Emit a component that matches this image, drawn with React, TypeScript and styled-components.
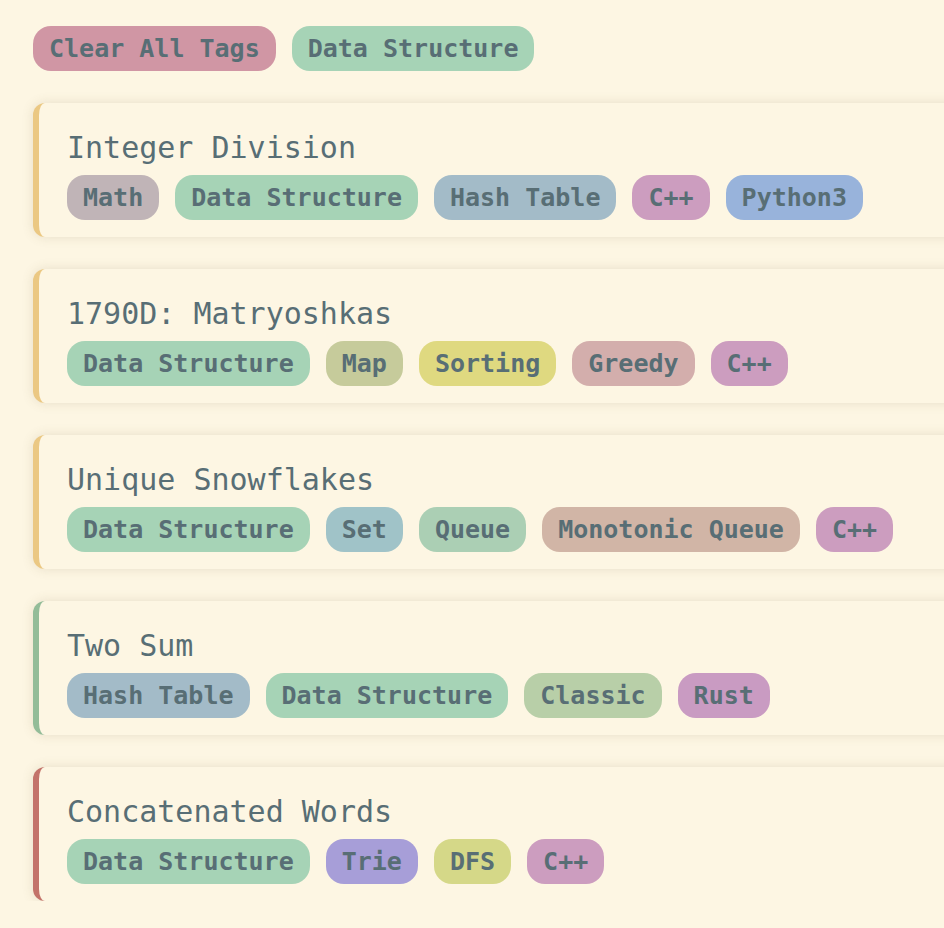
import styled, { createGlobalStyle } from "styled-components";

const GlobalStyle = createGlobalStyle`
  html, body {
    margin: 0;
    padding: 0;
    background: #fdf6e3;
    overflow: hidden;
  }
  body {
    font-family: "DejaVu Sans Mono", "Liberation Mono", monospace;
    color: #586e75;
  }
`;

const Page = styled.div`
  padding: 26px 0 0 33px;
  width: 960px;
`;

const TagRow = styled.div`
  display: flex;
  flex-wrap: wrap;
  gap: 16px;
`;

const Tag = styled.span<{ $bg: string }>`
  display: inline-flex;
  align-items: center;
  height: 45px;
  padding: 0 16px;
  border-radius: 18px;
  background: ${(p) => p.$bg};
  color: #586e75;
  font-size: 25px;
  font-weight: bold;
  white-space: pre;
`;

const CardList = styled.div`
  display: flex;
  flex-direction: column;
  gap: 32px;
  margin-top: 32px;
`;

const Card = styled.div<{ $accent: string }>`
  border-left: 6px solid ${(p) => p.$accent};
  border-radius: 12px 0 0 12px;
  background: #fdf6e3;
  box-shadow: 0 0 12px rgba(120, 100, 60, 0.16);
  padding: 27px 0 17px 28px;
`;

const Title = styled.div`
  font-size: 30px;
  line-height: 35px;
  margin-bottom: 10px;
  white-space: pre;
`;

const tagColors: Record<string, string> = {
  "Data Structure": "#a6d3b6",
  Math: "#c0b4b7",
  "Hash Table": "#a3bbc8",
  "C++": "#cc9dbf",
  Python3: "#98b3db",
  Map: "#c6cb9b",
  Sorting: "#dfd980",
  Greedy: "#d3aeac",
  Set: "#a0c3c8",
  Queue: "#abcfb4",
  "Monotonic Queue": "#d1b5a6",
  Classic: "#b8cfa8",
  Rust: "#c99bc2",
  Trie: "#a79ed8",
  DFS: "#d5d888",
};

const problems = [
  {
    title: "Integer Division",
    accent: "#ebc883",
    tags: ["Math", "Data Structure", "Hash Table", "C++", "Python3"],
  },
  {
    title: "1790D: Matryoshkas",
    accent: "#ebc883",
    tags: ["Data Structure", "Map", "Sorting", "Greedy", "C++"],
  },
  {
    title: "Unique Snowflakes",
    accent: "#ebc883",
    tags: ["Data Structure", "Set", "Queue", "Monotonic Queue", "C++"],
  },
  {
    title: "Two Sum",
    accent: "#93bc98",
    tags: ["Hash Table", "Data Structure", "Classic", "Rust"],
  },
  {
    title: "Concatenated Words",
    accent: "#c3736a",
    tags: ["Data Structure", "Trie", "DFS", "C++"],
  },
];

export default function App() {
  return (
    <>
      <GlobalStyle />
      <Page>
        <TagRow>
          <Tag $bg="#d096a4">Clear All Tags</Tag>
          <Tag $bg={tagColors["Data Structure"]}>Data Structure</Tag>
        </TagRow>
        <CardList>
          {problems.map((p) => (
            <Card key={p.title} $accent={p.accent}>
              <Title>{p.title}</Title>
              <TagRow>
                {p.tags.map((t) => (
                  <Tag key={t} $bg={tagColors[t]}>
                    {t}
                  </Tag>
                ))}
              </TagRow>
            </Card>
          ))}
        </CardList>
      </Page>
    </>
  );
}
